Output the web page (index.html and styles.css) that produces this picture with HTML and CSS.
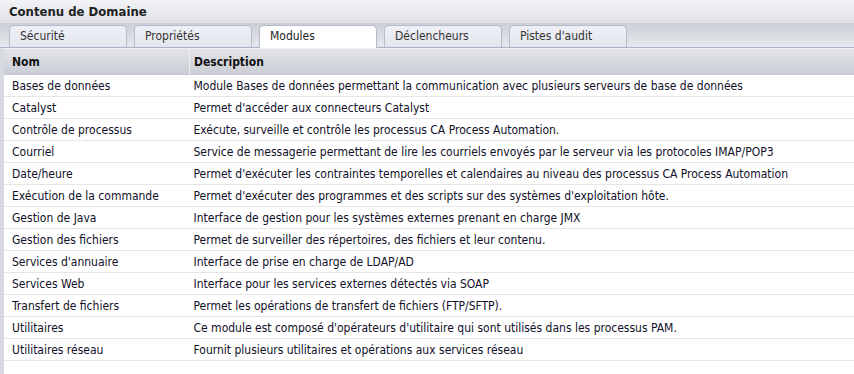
FILE: index.html
```html
<!DOCTYPE html>
<html lang="fr">
  <head>
    <meta charset="UTF-8" />
    <meta name="viewport" content="width=device-width, initial-scale=1.0" />
    <title>Contenu de Domaine</title>
    <link rel="stylesheet" href="styles.css">
  </head>
  <body>
    <div class="panel">
      <div class="title">Contenu de Domaine</div>
      <div class="tabs">
        <div class="tab">Sécurité</div>
        <div class="tab">Propriétés</div>
        <div class="tab active">Modules</div>
        <div class="tab">Déclencheurs</div>
        <div class="tab">Pistes d'audit</div>
      </div>
      <div class="content">
        <table class="grid">
          <thead>
            <tr>
              <th class="col-name">Nom</th>
              <th>Description</th>
            </tr>
          </thead>
          <tbody>
            <tr><td>Bases de données</td><td>Module Bases de données permettant la communication avec plusieurs serveurs de base de données</td></tr>
            <tr><td>Catalyst</td><td>Permet d'accéder aux connecteurs Catalyst</td></tr>
            <tr><td>Contrôle de processus</td><td>Exécute, surveille et contrôle les processus CA Process Automation.</td></tr>
            <tr><td>Courriel</td><td>Service de messagerie permettant de lire les courriels envoyés par le serveur via les protocoles IMAP/POP3</td></tr>
            <tr><td>Date/heure</td><td>Permet d'exécuter les contraintes temporelles et calendaires au niveau des processus CA Process Automation</td></tr>
            <tr><td>Exécution de la commande</td><td>Permet d'exécuter des programmes et des scripts sur des systèmes d'exploitation hôte.</td></tr>
            <tr><td>Gestion de Java</td><td>Interface de gestion pour les systèmes externes prenant en charge JMX</td></tr>
            <tr><td>Gestion des fichiers</td><td>Permet de surveiller des répertoires, des fichiers et leur contenu.</td></tr>
            <tr><td>Services d'annuaire</td><td>Interface de prise en charge de LDAP/AD</td></tr>
            <tr><td>Services Web</td><td>Interface pour les services externes détectés via SOAP</td></tr>
            <tr><td>Transfert de fichiers</td><td>Permet les opérations de transfert de fichiers (FTP/SFTP).</td></tr>
            <tr><td>Utilitaires</td><td>Ce module est composé d'opérateurs d'utilitaire qui sont utilisés dans les processus PAM.</td></tr>
            <tr><td>Utilitaires réseau</td><td>Fournit plusieurs utilitaires et opérations aux services réseau</td></tr>
          </tbody>
        </table>
      </div>
    </div>
  </body>
</html>
```

FILE: styles.css
```css
body {
  margin: 0;
  padding: 0;
  font-family: "DejaVu Sans Condensed", "DejaVu Sans", sans-serif;
  font-size: 12px;
  color: #101028;
  background: #fff;
}

.panel {
  width: 854px;
  height: 374px;
  display: flex;
  flex-direction: column;
  overflow: hidden;
}

.title {
  height: 23px;
  line-height: 24px;
  padding-left: 9px;
  font-size: 13px;
  font-weight: bold;
  color: #222;
  background: linear-gradient(#f2f3f5, #e0e2e7);
}

.tabs {
  height: 24px;
  display: flex;
  align-items: flex-end;
  gap: 7px;
  padding-left: 9px;
  background: linear-gradient(#cbced6, #e6e8ec);
  border-bottom: 1px solid #a8b2c6;
}

.tab {
  width: 106px;
  height: 21px;
  line-height: 21px;
  padding-left: 10px;
  border: 1px solid #b4bccb;
  border-bottom: none;
  border-radius: 5px 5px 0 0;
  background: linear-gradient(#eef0f5, #e2e6ee);
  color: #333;
}

.tab.active {
  background: #fff;
  height: 22px;
  margin-bottom: -1px;
  color: #222;
}

.content {
  flex: 1;
  border-left: 4px solid #d6d9df;
  border-top: 1px solid #eef0f4;
}

.grid {
  width: 100%;
  border-collapse: collapse;
}

.grid th {
  height: 25px;
  text-align: left;
  padding: 0 0 0 8px;
  font-weight: bold;
  color: #111;
  background: linear-gradient(#e2e4e8, #cacdd4);
  border-bottom: 1px solid #c4c8d0;
}

.grid th.col-name {
  width: 177px;
  border-right: 1px solid #eef0f3;
}

.grid th + th {
  padding-left: 4px;
}

.grid td {
  height: 21px;
  padding: 0 0 0 8px;
  white-space: nowrap;
  border-bottom: 1px solid #e6e6e6;
}

.grid td + td {
  padding-left: 4px;
}
```
